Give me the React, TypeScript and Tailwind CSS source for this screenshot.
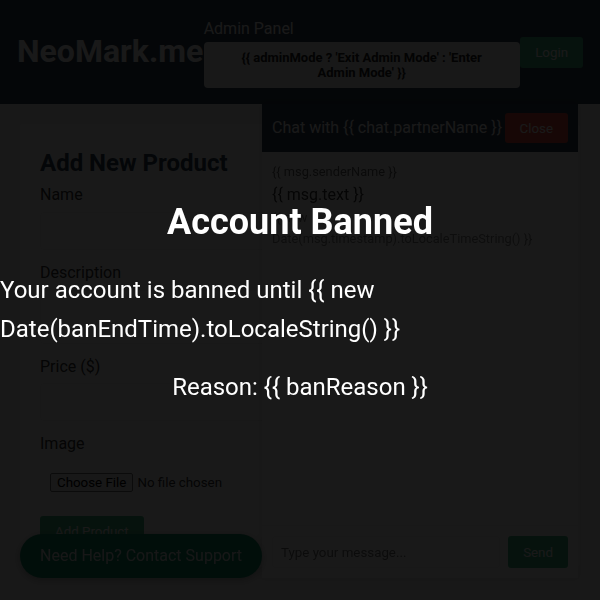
import { useState } from "react"

const messages = [
  {
    id: 1,
    sender: "{{ msg.senderName }}",
    text: "{{ msg.text }}",
    time: "{{ new Date(msg.timestamp).toLocaleTimeString() }}",
  },
]

function Header() {
  return (
    <header className="flex h-[104px] items-center justify-between bg-[#2c3e50] px-[17px] text-white">
      <h1 className="text-[32px] font-bold">NeoMark.me</h1>
      <div className="flex w-[316px] flex-col">
        <span className="text-[16px]">Admin Panel</span>
        <button className="h-[46px] rounded-[4px] bg-[#f0f0f0] px-5 text-[13px] font-bold leading-[15px] text-[#222]">
          {"{{ adminMode ? 'Exit Admin Mode' : 'Enter Admin Mode' }}"}
        </button>
      </div>
      <button className="h-[31px] rounded-[3px] bg-[#42b983] px-[15px] text-[13.33px] leading-[normal] text-white">
        Login
      </button>
    </header>
  )
}

function ProductForm() {
  return (
    <section className="rounded-[4px] bg-white p-5 text-[16px] text-[#333]">
      <h2 className="text-[24px] font-bold text-[#2c3e50]">Add New Product</h2>
      <label className="block">Name</label>
      <input className="mb-[10px] mt-1 block h-[38px] w-full rounded-[4px] border border-[#f2f2f2] px-[10px]" />
      <label className="block">Description</label>
      <textarea className="mb-[10px] mt-1 block h-[54px] w-full rounded-[4px] border border-[#f2f2f2] px-[10px]" />
      <label className="block">Price ($)</label>
      <input className="mb-[10px] mt-1 block h-[38px] w-full rounded-[4px] border border-[#f2f2f2] px-[10px]" />
      <label className="block">Image</label>
      <input
        type="file"
        className="mb-[14px] mt-[6px] block w-full p-[10px] text-[13.33px] leading-[normal] text-[#333] file:mr-[4px] file:rounded-[2px] file:border file:border-[#767676] file:bg-[#efefef] file:px-[6px] file:py-[1px] file:text-black"
      />
      <button className="h-[31px] rounded-[3px] bg-[#42b983] px-[15px] text-[13.33px] leading-[normal] text-white">
        Add Product
      </button>
    </section>
  )
}

function ChatPanel() {
  const [draft, setDraft] = useState("")
  return (
    <div className="fixed bottom-[22px] right-[22px] top-[104px] flex w-[316px] flex-col bg-white shadow-[0_0_8px_rgba(0,0,0,0.15)]">
      <div className="flex h-[48px] items-center justify-between bg-[#2c3e50] px-[10px] text-[16px] text-white">
        <span>{"Chat with {{ chat.partnerName }}"}</span>
        <button className="h-[30px] rounded-[3px] bg-[#e74c3c] px-[15px] text-[13.33px] leading-[normal] text-white">
          Close
        </button>
      </div>
      <div className="flex-1 overflow-hidden p-[10px]">
        {messages.map((m) => (
          <div key={m.id}>
            <div className="text-[12.8px] text-[#666]">{m.sender}</div>
            <div className="text-[16px] text-[#333]">{m.text}</div>
            <div className="max-w-[285px] text-[12.8px] text-[#888]">{m.time}</div>
          </div>
        ))}
      </div>
      <div className="flex items-center gap-2 border-t border-[#f0f0f0] p-[10px]">
        <input
          value={draft}
          onChange={(e) => setDraft(e.target.value)}
          placeholder="Type your message..."
          className="h-[32px] min-w-0 flex-1 rounded-[3px] border border-[#f0f0f0] px-2 text-[13.33px] text-[#333] placeholder:text-[#757575]"
        />
        <button className="h-[32px] rounded-[3px] bg-[#42b983] px-[15px] text-[13.33px] leading-[normal] text-white">
          Send
        </button>
      </div>
    </div>
  )
}

export default function App() {
  return (
    <div className="h-screen overflow-hidden bg-[#f4f4f4] font-['Roboto',sans-serif] leading-[1.6]">
      <Header />
      <main className="p-5">
        <ProductForm />
      </main>

      <ChatPanel />

      <button className="fixed bottom-[22px] left-5 rounded-full bg-[#128c6a] px-5 py-[9px] text-[16px] text-[#e8e8e8] shadow-[0_2px_8px_rgba(0,0,0,0.3)]">
        Need Help? Contact Support
      </button>

      {/* ban overlay */}
      <div className="fixed inset-0 z-50 flex flex-col items-center justify-center gap-5 bg-black/90 text-white">
        <h2 className="text-[36px] font-bold">Account Banned</h2>
        <p className="text-[24px]">{"Your account is banned until {{ new Date(banEndTime).toLocaleString() }}"}</p>
        <p className="text-[24px]">{"Reason: {{ banReason }}"}</p>
      </div>
    </div>
  )
}
